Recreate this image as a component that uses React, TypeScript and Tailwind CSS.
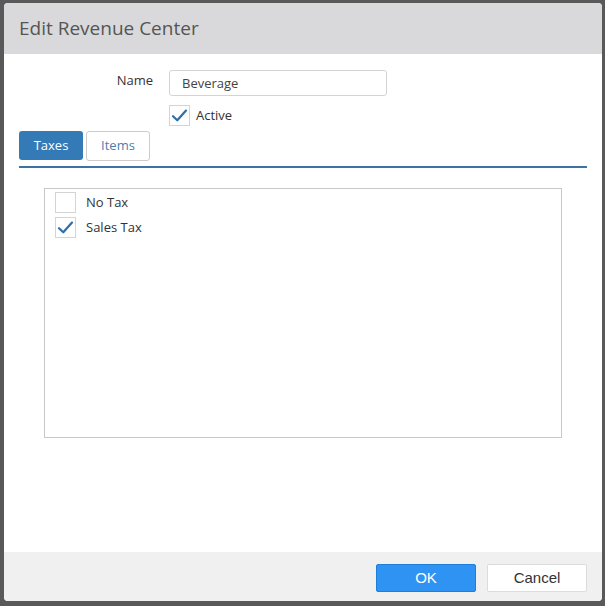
import { useState } from "react";

const font = { fontFamily: '"Open Sans", "Noto Sans", sans-serif' };

function Check({ checked, onClick }: { checked: boolean; onClick?: () => void }) {
  return (
    <button
      type="button"
      onClick={onClick}
      className="flex h-[21px] w-[21px] shrink-0 items-center justify-center border border-[#d4d4d4] bg-white"
    >
      {checked && (
        <svg width="17" height="17" viewBox="0 0 17 17" fill="none">
          <path d="M2 9.2 L6.3 13.3 L15 3.6" stroke="#2f6fa6" strokeWidth="2.2" strokeLinecap="round" strokeLinejoin="round" />
        </svg>
      )}
    </button>
  );
}

const taxes = [
  { id: "none", label: "No Tax", checked: false },
  { id: "sales", label: "Sales Tax", checked: true },
];

export default function App() {
  const [active, setActive] = useState(true);
  const [tab, setTab] = useState("taxes");
  const [rows, setRows] = useState(taxes);

  return (
    <div className="h-[606px] w-[605px] overflow-hidden bg-[#595959] pl-[4px] pt-[3px]" style={font}>
      <div className="flex h-[598px] w-[598px] flex-col overflow-hidden rounded-[4px] bg-white">
        <div className="flex h-[51px] shrink-0 items-center bg-[#d9d9dc] px-[15px]">
          <h1 className="text-[19px] text-[#555]">Edit Revenue Center</h1>
        </div>

        <div className="flex-1 px-[15px] pt-[16px]">
          <div className="flex items-start">
            <label className="w-[150px] pr-[16px] pt-[1px] text-right text-[13px] text-[#333]">Name</label>
            <input
              defaultValue="Beverage"
              className="h-[26px] w-[218px] rounded-[3px] border border-[#d4d4d4] px-[12px] text-[13px] text-[#444] outline-none"
            />
          </div>
          <div className="mt-[9px] flex items-center gap-[6px] pl-[150px]">
            <Check checked={active} onClick={() => setActive(!active)} />
            <span className="text-[13px] text-[#333]">Active</span>
          </div>

          <div className="mt-[5px] flex gap-[3px] border-b-2 border-[#3b73a3] pb-[5px]">
            <button
              type="button"
              onClick={() => setTab("taxes")}
              className={`h-[29px] w-[64px] rounded-[3px] text-[13px] ${
                tab === "taxes" ? "bg-[#337ab7] text-white" : "border border-[#ccc] bg-white text-[#337ab7]"
              }`}
            >
              Taxes
            </button>
            <button
              type="button"
              onClick={() => setTab("items")}
              className={`h-[30px] w-[64px] rounded-[3px] text-[13px] ${
                tab === "items" ? "bg-[#337ab7] text-white" : "border border-[#ccc] bg-white text-[#4a7fae]"
              }`}
            >
              Items
            </button>
          </div>

          <div className="ml-[25px] mt-[20px] h-[250px] w-[518px] border border-[#c8c8c8] px-[10px] pt-[3px]">
            {rows.map((r, i) => (
              <div key={r.id} className={`flex items-center gap-[10px] ${i > 0 ? "mt-[4px]" : ""}`}>
                <Check
                  checked={r.checked}
                  onClick={() => setRows(rows.map((x) => (x.id === r.id ? { ...x, checked: !x.checked } : x)))}
                />
                <span className="text-[13px] text-[#333]">{r.label}</span>
              </div>
            ))}
          </div>
        </div>

        <div className="flex h-[49px] shrink-0 items-start justify-end gap-[11px] bg-[#f0f0f0] pr-[15px] pt-[12px]" style={{ fontFamily: '"Liberation Sans", Arial, sans-serif' }}>
          <button type="button" className="h-[28px] w-[100px] rounded-[2px] border border-[#1f7fd8] bg-[#2e93f2] text-[15px] text-white">
            OK
          </button>
          <button type="button" className="h-[28px] w-[100px] rounded-[2px] border border-[#dcdcdc] bg-white text-[15px] text-[#333]">
            Cancel
          </button>
        </div>
      </div>
    </div>
  );
}
